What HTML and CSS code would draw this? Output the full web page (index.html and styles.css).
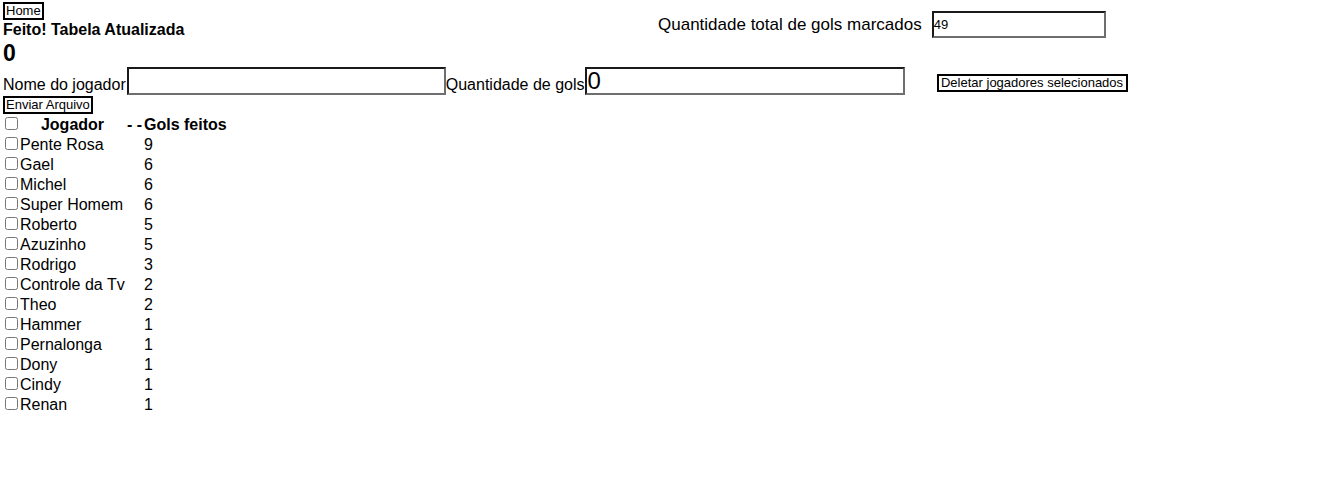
FILE: index.html
```html
<!DOCTYPE html>
<html lang="pt">
<head>
<meta charset="utf-8">
<title>Gols</title>
<link rel="stylesheet" href="styles.css">
</head>
<body>
<div class="top">
  <div class="left">
    <button class="btn home">Home</button>
    <div class="msg">Feito! Tabela Atualizada</div>
    <div class="count">0</div>
  </div>
  <div class="right">
    <span class="total-label">Quantidade total de gols marcados</span>
    <input class="field total" type="text" value="49">
  </div>
</div>
<div class="form-row">
  <span class="lbl">Nome do jogador</span><input class="field big" type="text"><span class="lbl">Quantidade de gols</span><input class="field big num" type="text" value="0">
  <button class="btn delete">Deletar jogadores selecionados</button>
</div>
<button class="btn send">Enviar Arquivo</button>
<table class="players">
  <thead>
    <tr><th class="c-check"><input type="checkbox" class="cb"></th><th class="c-name">Jogador</th><th class="c-sep">- -</th><th class="c-goals">Gols feitos</th></tr>
  </thead>
  <tbody>
    <tr><td class="c-check"><input type="checkbox" class="cb"></td><td class="c-name">Pente Rosa</td><td class="c-sep"></td><td>9</td></tr>
    <tr><td class="c-check"><input type="checkbox" class="cb"></td><td class="c-name">Gael</td><td class="c-sep"></td><td>6</td></tr>
    <tr><td class="c-check"><input type="checkbox" class="cb"></td><td class="c-name">Michel</td><td class="c-sep"></td><td>6</td></tr>
    <tr><td class="c-check"><input type="checkbox" class="cb"></td><td class="c-name">Super Homem</td><td class="c-sep"></td><td>6</td></tr>
    <tr><td class="c-check"><input type="checkbox" class="cb"></td><td class="c-name">Roberto</td><td class="c-sep"></td><td>5</td></tr>
    <tr><td class="c-check"><input type="checkbox" class="cb"></td><td class="c-name">Azuzinho</td><td class="c-sep"></td><td>5</td></tr>
    <tr><td class="c-check"><input type="checkbox" class="cb"></td><td class="c-name">Rodrigo</td><td class="c-sep"></td><td>3</td></tr>
    <tr><td class="c-check"><input type="checkbox" class="cb"></td><td class="c-name">Controle da Tv</td><td class="c-sep"></td><td>2</td></tr>
    <tr><td class="c-check"><input type="checkbox" class="cb"></td><td class="c-name">Theo</td><td class="c-sep"></td><td>2</td></tr>
    <tr><td class="c-check"><input type="checkbox" class="cb"></td><td class="c-name">Hammer</td><td class="c-sep"></td><td>1</td></tr>
    <tr><td class="c-check"><input type="checkbox" class="cb"></td><td class="c-name">Pernalonga</td><td class="c-sep"></td><td>1</td></tr>
    <tr><td class="c-check"><input type="checkbox" class="cb"></td><td class="c-name">Dony</td><td class="c-sep"></td><td>1</td></tr>
    <tr><td class="c-check"><input type="checkbox" class="cb"></td><td class="c-name">Cindy</td><td class="c-sep"></td><td>1</td></tr>
    <tr><td class="c-check"><input type="checkbox" class="cb"></td><td class="c-name">Renan</td><td class="c-sep"></td><td>1</td></tr>
  </tbody>
</table>
</body>
</html>
```
FILE: styles.css
```css
html, body {
  background: #fff;
}
body {
  margin: 0;
  padding: 2px 3px;
  font-family: "Liberation Sans", Arial, sans-serif;
  font-size: 16px;
  color: #000;
}
.top {
  display: grid;
  grid-template-columns: 655px 1fr;
}
.left {
  display: flex;
  flex-direction: column;
  align-items: flex-start;
}
.btn {
  font-family: "Liberation Sans", Arial, sans-serif;
  font-size: 13px;
  line-height: 14px;
  color: #000;
  background: #fff;
  border: 2px solid #000;
  padding: 0 1px;
  margin: 0;
  border-radius: 0;
}
.home {
  height: 18px;
}
.msg {
  font-weight: bold;
  font-size: 16px;
  line-height: 18px;
  margin-top: 1px;
}
.count {
  font-weight: bold;
  font-size: 23px;
  line-height: 24px;
  margin-top: 2px;
}
.right {
  display: flex;
  align-items: center;
  padding-top: 9px;
  height: 27px;
}
.total-label {
  font-size: 17px;
  margin-right: 10px;
}
.field {
  box-sizing: border-box;
  border-width: 2px;
  border-style: solid;
  border-top-color: #1a1a1a;
  border-left-color: #1a1a1a;
  border-bottom-color: #6e6e6e;
  border-right-color: #6e6e6e;
  background: #fff;
  margin: 0;
  padding: 1px;
  font-family: "Liberation Sans", Arial, sans-serif;
  color: #000;
}
.total {
  width: 174px;
  height: 27px;
  font-size: 13px;
  padding-left: 0;
}
.form-row {
  display: flex;
  align-items: center;
  margin-top: 2px;
  height: 28px;
}
.big {
  width: 319px;
  height: 28px;
  font-size: 16px;
}
.num {
  width: 320px;
  font-size: 24px;
  line-height: 24px;
  padding: 0 1px;
}
.lbl {
  align-self: flex-end;
  line-height: 18px;
  margin-bottom: 1px;
}
.lbl:first-child {
  margin-right: 1px;
}
.delete {
  margin-left: 32px;
  width: 191px;
  height: 18px;
  margin-top: 4px;
  padding: 0;
}
.send {
  display: block;
  height: 18px;
  margin-top: 1px;
}
.players {
  border-collapse: collapse;
  border-spacing: 0;
  margin-top: 1px;
}
.players th, .players td {
  padding: 0;
  height: 20px;
  vertical-align: middle;
  font-size: 16px;
  line-height: 18px;
}
.players th {
  font-weight: bold;
}
.players td {
  text-align: left;
}
.c-check {
  width: 17px;
}
.cb {
  width: 13px;
  height: 13px;
  margin: -3px 0 0 2px;
  display: block;
}
.c-name {
  width: 105px;
  text-align: left;
}
th.c-name {
  text-align: center;
}
.players .c-sep {
  width: 17px;
  padding-left: 2px;
  text-align: left;
  white-space: nowrap;
}
```
